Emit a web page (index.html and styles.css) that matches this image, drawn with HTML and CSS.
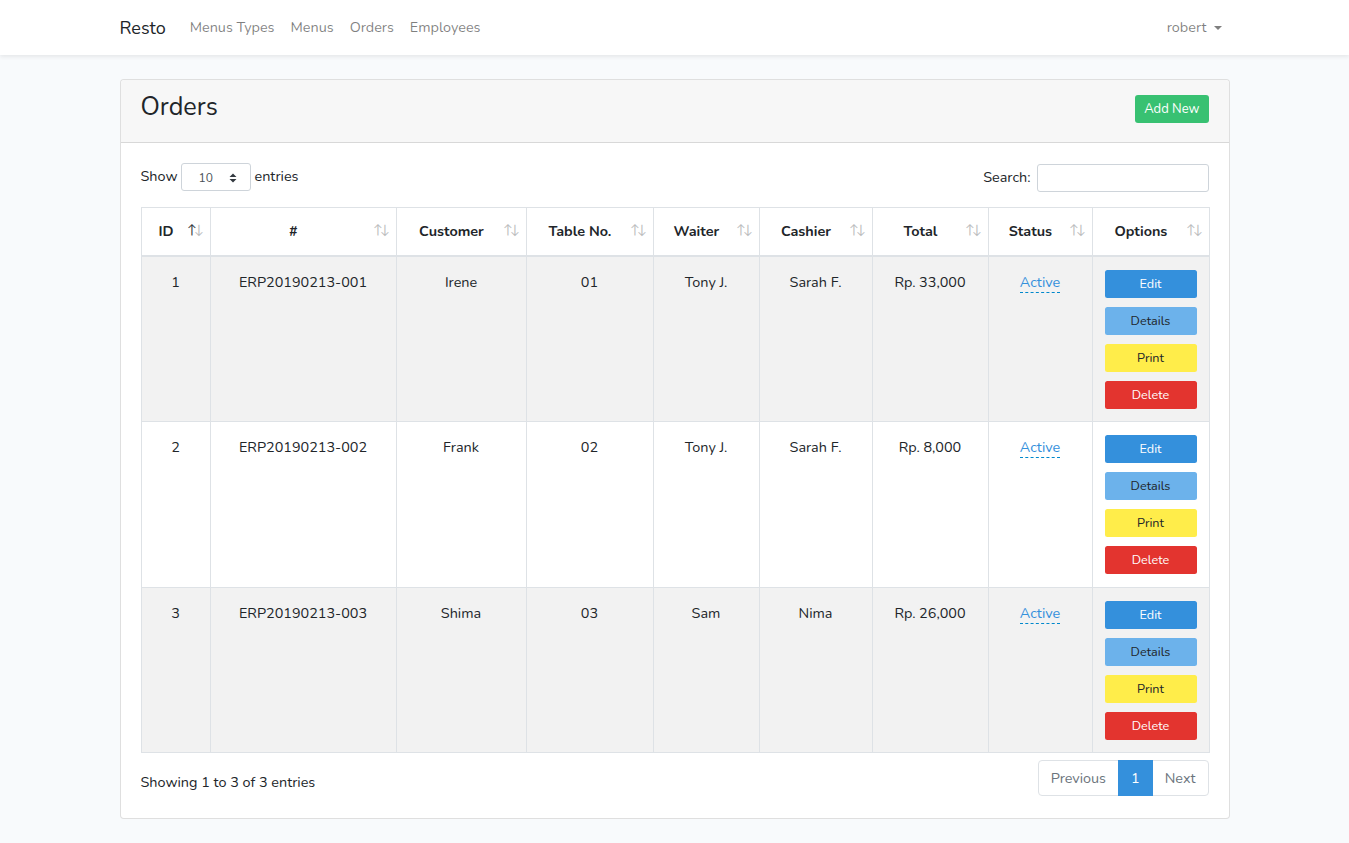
FILE: index.html
```html
<!DOCTYPE html>
<html lang="en">
<head>
<meta charset="utf-8">
<title>Resto - Orders</title>
<link rel="stylesheet" href="styles.css">
</head>
<body>
<nav class="navbar">
  <div class="container nav-inner">
    <a class="brand" href="#">Resto</a>
    <ul class="nav-links">
      <li><a href="#">Menus Types</a></li>
      <li><a href="#">Menus</a></li>
      <li><a href="#">Orders</a></li>
      <li><a href="#">Employees</a></li>
    </ul>
    <a class="user" href="#">robert <span class="caret"></span></a>
  </div>
</nav>
<main class="main">
  <div class="container">
    <div class="card">
      <div class="card-header">
        <h3 class="card-title">Orders</h3>
        <a class="btn btn-success" href="#">Add New</a>
      </div>
      <div class="card-body">
        <div class="dt-top">
          <div class="dt-length">Show
            <span class="select-sm">10
              <svg class="select-arrow" width="8" height="10" viewBox="0 0 8 10"><path d="M4 0.5 L7.5 4 H0.5 Z M4 9.5 L0.5 6 H7.5 Z" fill="#343a40"/></svg>
            </span>
            entries</div>
          <div class="dt-search">Search: <input class="input-sm" type="text"></div>
        </div>
        <table class="table">
          <colgroup>
            <col style="width:69px"><col style="width:186px"><col style="width:130px"><col style="width:127px"><col style="width:106px"><col style="width:113px"><col style="width:116px"><col style="width:104px"><col style="width:117px">
          </colgroup>
          <thead>
            <tr>
              <th class="sorting sorting-asc">ID</th>
              <th class="sorting">#</th>
              <th class="sorting">Customer</th>
              <th class="sorting">Table No.</th>
              <th class="sorting">Waiter</th>
              <th class="sorting">Cashier</th>
              <th class="sorting">Total</th>
              <th class="sorting">Status</th>
              <th class="sorting">Options</th>
            </tr>
          </thead>
          <tbody>
            <tr class="odd">
              <td>1</td><td>ERP20190213-001</td><td>Irene</td><td>01</td><td>Tony J.</td><td>Sarah F.</td><td>Rp. 33,000</td>
              <td><a class="editable" href="#">Active</a></td>
              <td><div class="opts"><a class="btn-sm btn-primary" href="#">Edit</a><a class="btn-sm btn-info" href="#">Details</a><a class="btn-sm btn-warning" href="#">Print</a><a class="btn-sm btn-danger" href="#">Delete</a></div></td>
            </tr>
            <tr>
              <td>2</td><td>ERP20190213-002</td><td>Frank</td><td>02</td><td>Tony J.</td><td>Sarah F.</td><td>Rp. 8,000</td>
              <td><a class="editable" href="#">Active</a></td>
              <td><div class="opts"><a class="btn-sm btn-primary" href="#">Edit</a><a class="btn-sm btn-info" href="#">Details</a><a class="btn-sm btn-warning" href="#">Print</a><a class="btn-sm btn-danger" href="#">Delete</a></div></td>
            </tr>
            <tr class="odd">
              <td>3</td><td>ERP20190213-003</td><td>Shima</td><td>03</td><td>Sam</td><td>Nima</td><td>Rp. 26,000</td>
              <td><a class="editable" href="#">Active</a></td>
              <td><div class="opts"><a class="btn-sm btn-primary" href="#">Edit</a><a class="btn-sm btn-info" href="#">Details</a><a class="btn-sm btn-warning" href="#">Print</a><a class="btn-sm btn-danger" href="#">Delete</a></div></td>
            </tr>
          </tbody>
        </table>
        <div class="dt-bottom">
          <div class="dt-info">Showing 1 to 3 of 3 entries</div>
          <ul class="pagination">
            <li class="page-item disabled"><a href="#">Previous</a></li>
            <li class="page-item active"><a href="#">1</a></li>
            <li class="page-item disabled"><a href="#">Next</a></li>
          </ul>
        </div>
      </div>
    </div>
  </div>
</main>
</body>
</html>
```
FILE: styles.css
```css
* { box-sizing: border-box; }
html, body { margin: 0; padding: 0; }
body {
  font-family: "Nunito", Lato, "Open Sans", sans-serif;
  font-size: 14.4px;
  line-height: 1.5;
  color: #212529;
  background: #f8fafc;
}
a { text-decoration: none; }
.container {
  width: 1140px;
  margin: 0 auto;
  padding: 0 15px;
}
.navbar {
  background: #fff;
  height: 55px;
  box-shadow: 0 2px 4px rgba(0,0,0,.075);
}
.nav-inner {
  display: flex;
  align-items: center;
  height: 55px;
  padding-top: 1px;
}
.brand {
  color: #212529;
  font-size: 18px;
  margin-right: 16px;
  line-height: 27px;
}
.nav-links {
  display: flex;
  list-style: none;
  margin: 0;
  padding: 0;
  flex: 1;
}
.nav-links a, .user {
  color: rgba(0,0,0,.5);
  padding: 8px;
  display: block;
}
.user {
  display: flex;
  align-items: center;
  padding-right: 8px;
  margin-right: 0;
}
.caret {
  display: inline-block;
  margin-left: 7px;
  border-top: 4.5px solid rgba(0,0,0,.5);
  border-left: 4px solid transparent;
  border-right: 4px solid transparent;
}
.main { padding: 24px 0; }
.card {
  background: #fff;
  border: 1px solid rgba(0,0,0,.125);
  border-radius: 4px;
}
.card-header {
  background: #f7f7f7;
  border-bottom: 1px solid rgba(0,0,0,.125);
  padding: 12px 20px 12px 20px;
  height: 63px;
  display: flex;
  justify-content: space-between;
  align-items: flex-start;
  border-radius: 4px 4px 0 0;
}
.card-title {
  margin: 0;
  font-size: 25.2px;
  font-weight: 400;
  line-height: 30px;
  padding-top: 0;
}
.btn {
  display: inline-block;
  border-radius: 3px;
  font-size: 13px;
  line-height: 28px;
  height: 28px;
  padding: 0 9px;
  margin-top: 3px;
}
.btn-success { background: #38c172; color: #fff; }
.card-body { padding: 20px; }
.dt-top {
  display: flex;
  justify-content: space-between;
  align-items: center;
  height: 28px;
  margin-bottom: 16px;
}
.dt-length, .dt-search {
  display: flex;
  align-items: center;
  white-space: nowrap;
}
.select-sm {
  display: inline-flex;
  align-items: center;
  justify-content: space-between;
  width: 70px;
  height: 28px;
  margin: 0 4px 0 3px;
  padding: 1px 13px 0 17px;
  border: 1px solid #ced4da;
  border-radius: 3px;
  font-size: 12px;
  color: #495057;
  background: #fff;
}
.select-arrow { display: block; }
.dt-search { padding-top: 2px; }
.dt-search .input-sm {
  margin-left: 6px;
  width: 172px;
  height: 28px;
  border: 1px solid #ced4da;
  border-radius: 3px;
  font-family: inherit;
  font-size: 12.6px;
  padding: 4px 8px;
}
.table {
  width: 1068px;
  border-collapse: collapse;
  table-layout: fixed;
  margin-bottom: 8px;
}
.table th, .table td {
  border: 1px solid #dee2e6;
  text-align: center;
  vertical-align: top;
}
.table th {
  font-weight: 700;
  padding: 12.5px 30px 12.5px 10.8px;
  border-bottom: 2px solid #dee2e6;
  position: relative;
}
.table td {
  padding: 13px 12px 12.5px 12px;
  line-height: 25px;
}
.table tr.odd td { background: #f2f2f2; }
.sorting::before, .sorting::after {
  position: absolute;
  bottom: 14px;
  font-weight: 400;
  font-size: 13px;
  color: #212529;
  opacity: .3;
  line-height: 1.5;
}
.sorting::before { content: "\2191"; right: 12.5px; }
.sorting::after { content: "\2193"; right: 5.5px; }
.sorting-asc::before { opacity: .9; }
.editable {
  color: #3490dc;
  border-bottom: 1px dashed #0088cc;
}
.opts {
  display: flex;
  flex-direction: column;
  gap: 9px;
  line-height: 28px;
}
.btn-sm {
  display: block;
  height: 28px;
  line-height: 28px;
  font-size: 12.6px;
  border-radius: 2.5px;
  text-align: center;
}
.btn-primary { background: #3490dc; color: #fff; }
.btn-info { background: #6cb2eb; color: #212529; }
.btn-warning { background: #ffed4a; color: #212529; }
.btn-danger { background: #e3342f; color: #fff; }
.dt-bottom {
  display: flex;
  justify-content: space-between;
  align-items: flex-start;
  margin-top: -3px;
}
.dt-info { padding-top: 14px; }
.pagination {
  display: flex;
  list-style: none;
  margin: 2px 0;
  padding: 0;
  border-radius: 4px;
}
.page-item a {
  display: block;
  padding: 7px 12px;
  line-height: 20px;
  border: 1px solid #dee2e6;
  margin-left: -1px;
  color: #6c757d;
  background: #fff;
}
.page-item:first-child a { border-radius: 4px 0 0 4px; margin-left: 0; }
.page-item:last-child a { border-radius: 0 4px 4px 0; }
.page-item.active a {
  background: #3490dc;
  border-color: #3490dc;
  color: #fff;
  position: relative;
  z-index: 1;
}
```
